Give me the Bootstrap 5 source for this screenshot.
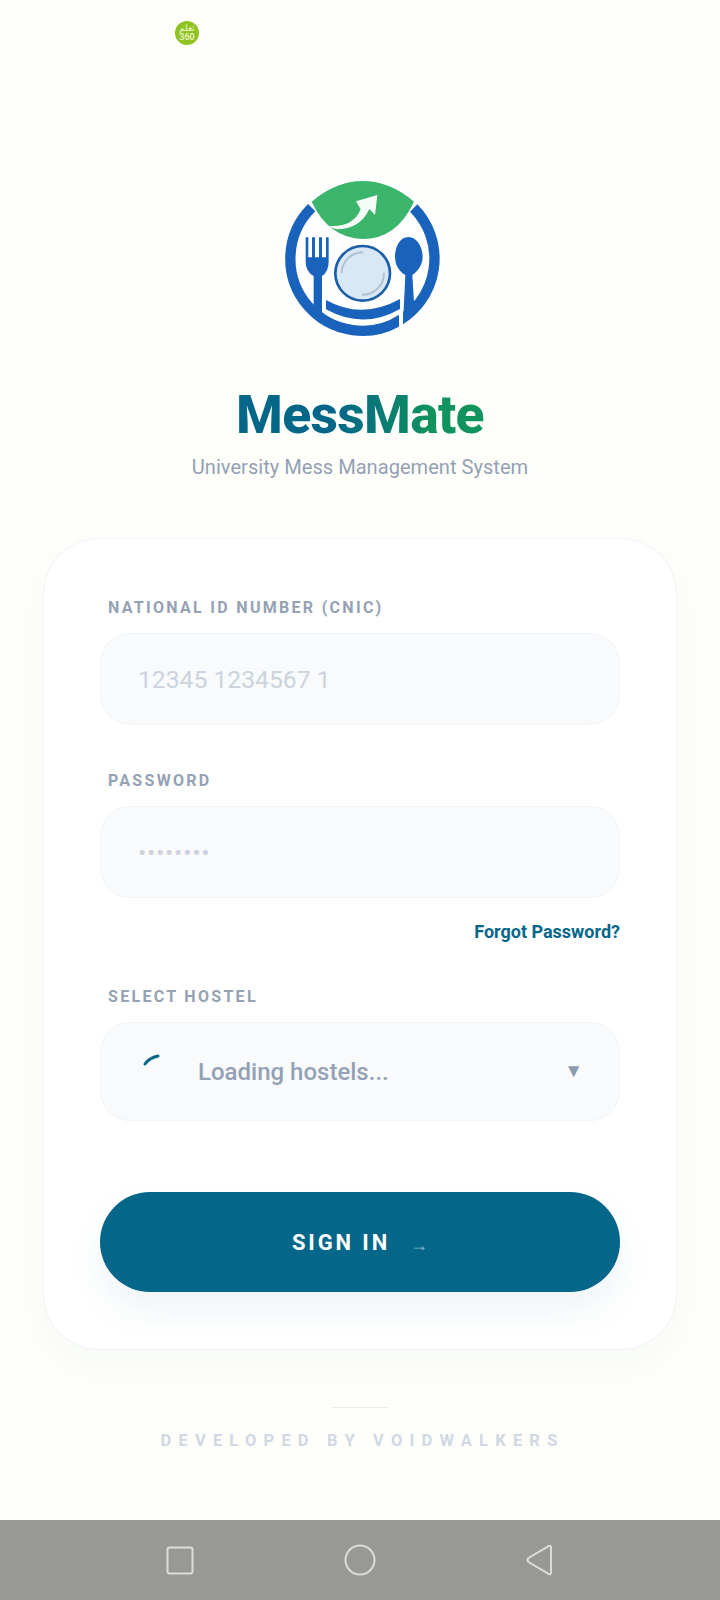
<!DOCTYPE html>
<html lang="en">
<head>
    <meta charset="UTF-8">
    <meta name="viewport" content="width=device-width, initial-scale=1.0">
    <title>MessMate</title>
    <link rel="stylesheet" href="https://cdn.jsdelivr.net/npm/bootstrap@5.3.0/dist/css/bootstrap.min.css">
    <style>
        html, body { height: 100%; }
        body {
            background: #fefffa;
            font-family: Roboto, "Liberation Sans", sans-serif;
            overflow: hidden;
        }
        .screen { height: 1600px; }
        .status-area { height: 140px; padding: 21px 0 0 175px; }
        .status-dot {
            width: 24px;
            height: 24px;
            border-radius: 50%;
            background: #8fc31f;
            color: #eef7d8;
            font-size: 9px;
            line-height: 9px;
            font-weight: 500;
        }
        .logo-svg { display: block; width: 240px; height: 220px; margin: 0 auto; }
        .brand-title {
            font-size: 53.5px;
            font-weight: 800;
            line-height: 60px;
            letter-spacing: -0.7px;
            margin: 25px 0 0;
            background: linear-gradient(90deg, #046689 0%, #046689 40%, #10935c 80%);
            -webkit-background-clip: text;
            background-clip: text;
            color: transparent;
        }
        .brand-sub {
            font-size: 20.1px;
            line-height: 28px;
            color: #94a1b4;
            margin: 8px 0 0;
        }
        .login-card {
            margin: 57px 43px 0;
            width: 634px;
            padding: 57px 56px 57px;
            border: 1px solid #f1f3f5;
            border-radius: 56px;
            box-shadow: 0 16px 40px rgba(30, 60, 90, 0.03);
        }
        .field-label {
            display: block;
            font-size: 16px;
            font-weight: 700;
            line-height: 24px;
            letter-spacing: 2.3px;
            color: #95a2b4;
            margin: 0 0 13px 8px;
        }
        .field-box {
            height: 92px;
            padding: 0 37px;
            background: #f8fafc;
            border: 1px solid #f1f4f7;
            border-radius: 30px;
            font-size: 24.7px;
            color: #334155;
        }
        .field-box::placeholder { color: #cbd4de; opacity: 1; }
        .field-box.pass-box::placeholder { letter-spacing: 0.7px; }
        .field-box:focus { background: #f8fafc; box-shadow: none; border-color: #f1f4f7; }
        .gap-field { margin-bottom: 44px; }
        .forgot-row { margin: 22px 0 40px; line-height: 24px; }
        .forgot-link {
            font-size: 18px;
            font-weight: 700;
            color: #046689;
            text-decoration: none;
        }
        .hostel-box {
            height: 99px;
            padding: 0 36px 0 41px;
            background: #f8fafc;
            border: 1px solid #f1f4f7;
            border-radius: 30px;
        }
        .spin-arc { width: 20px; height: 16px; margin: -24px 36px 0 0; flex: none; }
        .hostel-text { font-size: 24px; font-weight: 500; color: #94a1b4; }
        .hostel-caret { font-size: 19px; color: #8e9bad; }
        .signin-btn {
            height: 100px;
            margin-top: 71px;
            border: 0;
            border-radius: 50px;
            background: #046689;
            color: #fff;
            font-size: 22px;
            font-weight: 700;
            letter-spacing: 2.9px;
            box-shadow: 0 18px 36px rgba(4, 102, 137, 0.07);
        }
        .signin-btn:hover, .signin-btn:active { background: #046689; color: #fff; }
        .signin-arrow { font-size: 18px; font-weight: 400; letter-spacing: 0; color: #8fb6c6; margin: 4px 0 0 20px; }
        .foot-rule { width: 56px; height: 1px; background: #e7ebf0; margin: 57px auto 0; }
        .foot-text {
            font-size: 16.5px;
            font-weight: 700;
            letter-spacing: 7.2px;
            line-height: 24px;
            color: #cfd8e3;
            margin: 21px 0 0;
            padding-left: 5px;
        }
        .nav-strip { height: 80px; margin-top: auto; background: #989994; }
        .nav-strip svg { position: absolute; left: 0; top: 0; }
    </style>
</head>
<body>
    <div class="screen d-flex flex-column">
        <!-- status bar -->
        <div class="status-area">
            <div class="status-dot d-flex flex-column align-items-center justify-content-center text-center">
                <span>تعلم</span><span>360</span>
            </div>
        </div>

        <!-- logo -->
        <svg class="logo-svg" viewBox="0 0 720 660" xmlns="http://www.w3.org/2000/svg" aria-label="MessMate logo">
            <defs>
                <radialGradient id="halo">
                    <stop offset="0.86" stop-color="#ffffff"/>
                    <stop offset="1" stop-color="#ffffff" stop-opacity="0"/>
                </radialGradient>
                <clipPath id="ringLeft"><rect x="0" y="0" width="477" height="660"/></clipPath>
                <clipPath id="ringRight"><rect x="489" y="0" width="231" height="660"/></clipPath>
            </defs>
            <circle cx="367" cy="356" r="272" fill="url(#halo)"/>
            <!-- ring -->
            <g fill="none" stroke="#1a63bd" stroke-width="31">
                <path d="M215 203 A216 216 0 0 0 490 534" clip-path="url(#ringLeft)"/>
                <path d="M521 204 A216 216 0 0 1 470 546" clip-path="url(#ringRight)"/>
            </g>
            <!-- leaf -->
            <path d="M215 185 Q288 123 368 123 Q450 123 522 185 Q470 297 368 297 Q265 293 215 185 Z" fill="#3bb56b"/>
            <path d="M268 258 Q340 262 362 208 L348 184 L412 165 L405 225 L388 207 Q360 268 290 268 Q275 266 268 258 Z" fill="#f4fbf6"/>
            <!-- fork -->
            <path d="M197 292 H205 V352 H216 V292 H225 V352 H237 V292 H246 V352 H258 V292 H266 V365 Q266 395 246 408 V525 H221 V408 Q197 395 197 365 Z" fill="#1a63bd"/>
            <!-- plate -->
            <circle cx="368" cy="400" r="82" fill="#d8e8f7" stroke="#1d5ea8" stroke-width="8"/>
            <path d="M305 400 A63 63 0 0 1 370 337" fill="none" stroke="#b5c2d1" stroke-width="6"/>
            <path d="M432 398 A64 64 0 0 1 366 464" fill="none" stroke="#b5c2d1" stroke-width="6"/>
            <!-- bowl -->
            <path d="M258 480 Q365 540 480 477 V507 Q370 570 258 508 Z" fill="#1a63bd"/>
            <!-- spoon -->
            <path d="M505 291 C530 291 548 320 548 350 C548 378 530 395 517 405 L522 486 L535 500 L489 552 L496 405 C480 395 465 378 465 350 C465 320 480 291 505 291 Z" fill="#1a63bd"/>
        </svg>

        <!-- brand -->
        <div class="text-center">
            <h1 class="brand-title d-inline-block">MessMate</h1>
            <p class="brand-sub">University Mess Management System</p>
        </div>

        <!-- login form -->
        <div class="card login-card bg-white">
            <label class="field-label" for="cnic">NATIONAL ID NUMBER (CNIC)</label>
            <input id="cnic" type="text" class="form-control field-box gap-field" placeholder="12345 1234567 1">

            <label class="field-label" for="pass">PASSWORD</label>
            <input id="pass" type="password" class="form-control field-box pass-box" placeholder="••••••••">
            <div class="forgot-row text-end"><a href="#" class="forgot-link">Forgot Password?</a></div>

            <label class="field-label">SELECT HOSTEL</label>
            <div class="hostel-box d-flex align-items-center">
                <svg class="spin-arc" viewBox="0 0 20 16" xmlns="http://www.w3.org/2000/svg">
                    <path d="M3 12 Q7 6 16 4" fill="none" stroke="#046689" stroke-width="3" stroke-linecap="round"/>
                </svg>
                <span class="hostel-text flex-grow-1">Loading hostels...</span>
                <span class="hostel-caret">▼</span>
            </div>

            <button type="button" class="btn signin-btn w-100 d-flex align-items-center justify-content-center">
                <span>SIGN IN</span><span class="signin-arrow">→</span>
            </button>
        </div>

        <!-- footer -->
        <div class="foot-rule"></div>
        <p class="foot-text text-center">DEVELOPED BY VOIDWALKERS</p>

        <!-- android nav bar -->
        <div class="nav-strip d-flex align-items-center justify-content-center position-relative">
            <svg width="720" height="80" viewBox="0 0 720 80" xmlns="http://www.w3.org/2000/svg">
                <g fill="none" stroke="#dcdcd8" stroke-width="2">
                    <rect x="167.500" y="27.500" width="25" height="26" rx="2"/>
                    <circle cx="360" cy="40" r="14.500"/>
                    <path d="M549 26 Q551 25 551 28 V52 Q551 55 549 54 L528.500 42 Q526.500 40 528.500 38 Z"/>
                </g>
            </svg>
        </div>
    </div>

    <script src="https://cdn.jsdelivr.net/npm/bootstrap@5.3.0/dist/js/bootstrap.bundle.min.js"></script>
</body>
</html>
